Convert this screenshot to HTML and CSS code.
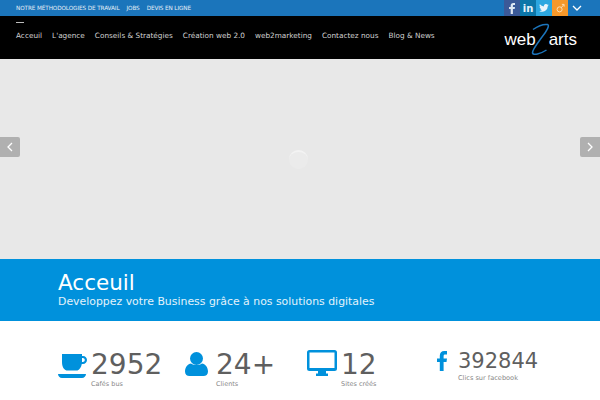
FILE: index.html
```html
<!DOCTYPE html>
<html lang="fr">
<head>
    <meta charset="UTF-8">
    <meta name="viewport" content="width=device-width, initial-scale=1.0">
    <title>web2arts</title>
    <link rel="stylesheet" href="styles.css">
</head>
<body>
    <div class="topbar">
        <ul class="top-links">
            <li>Notre méthodologies de travail</li>
            <li>Jobs</li>
            <li>Devis en ligne</li>
        </ul>
        <div class="social">
            <span class="social-btn fb">
                <svg width="6" height="11" viewBox="0 0 6 11"><path fill="#dfe6f2" d="M1.700 11V6H0V4h1.700V2.600C1.700.9 2.700 0 4.200 0H6v2H4.800c-.7 0-.9.3-.9.9V4H6l-.3 2H3.900v5z"/></svg>
            </span>
            <span class="social-btn in">in</span>
            <span class="social-btn tw">
                <svg width="10" height="8" viewBox="0 0 24 20"><path fill="#e8f4fb" d="M24 2.400c-.9.4-1.800.7-2.800.8 1-.6 1.800-1.600 2.200-2.700-1 .6-2 1-3.100 1.200A4.900 4.900 0 0 0 11.900 6.200 14 14 0 0 1 1.700.9a4.900 4.900 0 0 0 1.500 6.600c-.8 0-1.600-.2-2.200-.6 0 2.400 1.700 4.400 3.900 4.900-.7.2-1.500.2-2.200.1.600 2 2.400 3.400 4.600 3.400A9.900 9.900 0 0 1 0 17.300 14 14 0 0 0 21.500 4.900c1-.7 1.900-1.500 2.500-2.500z"/></svg>
            </span>
            <span class="social-btn gp">
                <svg width="9" height="10" viewBox="0 0 10 11"><circle cx="4" cy="7" r="2.800" fill="none" stroke="#fbe3c0" stroke-width="1"/><path d="M6 5l2.500-3M6.500 1.500h2.500V4" fill="none" stroke="#fbe3c0" stroke-width="1"/></svg>
            </span>
            <span class="social-btn more">
                <svg width="10" height="6" viewBox="0 0 10 6"><path d="M1 1l4 4 4-4" fill="none" stroke="#fff" stroke-width="1.300"/></svg>
            </span>
        </div>
    </div>

    <div class="navbar">
        <ul class="menu">
            <li class="active">Acceuil</li>
            <li>L'agence</li>
            <li>Conseils &amp; Stratégies</li>
            <li>Création web 2.0</li>
            <li>web2marketing</li>
            <li>Contactez nous</li>
            <li>Blog &amp; News</li>
        </ul>
        <div class="logo">
            <span>web</span>
            <svg class="logo-two" width="24" height="33" viewBox="0 0 24 33"><path d="M3 6.500C8 3 14 1 17.500 1.500 20 2 17 8 12 14 7 21 2 27 2.500 30c.5 2.500 8 1 14-3" fill="none" stroke="#1c75bc" stroke-width="1.500"/></svg>
            <span>arts</span>
        </div>
    </div>

    <div class="slider">
        <span class="arrow arrow-left">
            <svg width="6" height="10" viewBox="0 0 6 10"><path d="M5 1L1 5l4 4" fill="none" stroke="#fff" stroke-width="1.300"/></svg>
        </span>
        <span class="spinner"></span>
        <span class="arrow arrow-right">
            <svg width="6" height="10" viewBox="0 0 6 10"><path d="M1 1l4 4-4 4" fill="none" stroke="#fff" stroke-width="1.300"/></svg>
        </span>
    </div>

    <div class="banner">
        <h1>Acceuil</h1>
        <p>Developpez votre Business grâce à nos solutions digitales</p>
    </div>

    <div class="stats">
        <div class="stat stat-coffee">
            <svg class="stat-icon" width="29" height="24" viewBox="0 0 29 24"><path fill="#0091dc" fill-rule="evenodd" d="M4 0h20v2h1c2.300 0 4 1.700 4 4s-1.700 4-4 4h-1.200c-.6 3-2 5.500-4.300 6.500H8.500C5.500 15.500 4 12 4 8zM24 4v4h.8c1.100 0 2-.9 2-2s-.9-2-2-2zM0 20h28c0 2.200-1.800 4-4 4H4c-2.200 0-4-1.800-4-4z"/></svg>
            <div>
                <div class="stat-num">2952</div>
                <div class="stat-label">Cafés bus</div>
            </div>
        </div>
        <div class="stat stat-clients">
            <svg class="stat-icon" width="23" height="24" viewBox="0 0 23 24"><circle cx="11.500" cy="6.500" r="6.500" fill="#0091dc"/><path fill="#0091dc" d="M0 19.500C0 15 3 12 6 11.500c3 2 8 2 11 0 3 .5 6 3.500 6 8 0 3-2 4.500-4.500 4.500h-14C2 24 0 22.500 0 19.500z"/></svg>
            <div>
                <div class="stat-num">24+</div>
                <div class="stat-label">Clients</div>
            </div>
        </div>
        <div class="stat stat-sites">
            <svg class="stat-icon" width="30" height="26" viewBox="0 0 30 26"><path fill="#0091dc" fill-rule="evenodd" d="M2.500 0h25A2.500 2.500 0 0 1 30 2.500v16a2.500 2.500 0 0 1-2.500 2.500H19v2.500h2V26H9v-2.500h2V21H2.500A2.500 2.500 0 0 1 0 18.500v-16A2.500 2.500 0 0 1 2.500 0zM2.500 2.500v15.500h25V2.500z"/></svg>
            <div>
                <div class="stat-num">12</div>
                <div class="stat-label">Sites créés</div>
            </div>
        </div>
        <div class="stat stat-fb">
            <svg class="stat-icon" width="10" height="20" viewBox="0 0 10 20"><path fill="#0091dc" d="M2.800 20V11H0V7.500h2.800V4.700C2.800 1.700 4.500 0 7.200 0H10v3.500H8.200c-1.200 0-1.600.6-1.600 1.600v2.400H10L9.500 11H6.600v9z"/></svg>
            <div>
                <div class="stat-num">392844</div>
                <div class="stat-label">Clics sur facebook</div>
            </div>
        </div>
    </div>
</body>
</html>
```

FILE: styles.css
```css
* {
    margin: 0;
    padding: 0;
    box-sizing: border-box;
}

body {
    background-color: #fff;
    color: #5f5f5f;
    font-family: 'DejaVu Sans', sans-serif;
    overflow: hidden;
}

ul {
    list-style: none;
}

/* Top bar */
.topbar {
    display: flex;
    justify-content: space-between;
    height: 16px;
    padding: 0 15px 0 16px;
    background-color: #1b75bb;
}

.top-links {
    display: flex;
    gap: 7px;
    align-items: center;
    color: #e4eef7;
    font-size: 5.700px;
    letter-spacing: -0.1px;
    text-transform: uppercase;
}

.social {
    display: flex;
}

.social-btn {
    display: flex;
    justify-content: center;
    align-items: center;
    width: 16px;
    height: 16px;
}

.fb { background-color: #3b5998; }
.in {
    background-color: #0c76a8;
    color: #e8f4fb;
    font-size: 10px;
    font-weight: bold;
}
.tw { background-color: #2ca7e0; }
.gp { background-color: #f7982a; }
.more { width: 17px; }

/* Nav */
.navbar {
    display: flex;
    justify-content: space-between;
    height: 43px;
    padding: 0 23px 0 16px;
    background-color: #000;
}

.menu {
    display: flex;
    gap: 10px;
    margin-top: 14px;
    color: #d2d2d2;
    font-size: 7.300px;
    line-height: 11px;
}

.menu .active {
    position: relative;
}

.menu .active::before {
    content: "";
    position: absolute;
    top: -8px;
    left: 0;
    width: 8px;
    height: 1px;
    background-color: #bbb;
}

.logo {
    display: flex;
    align-items: center;
    height: 33px;
    margin-top: 7px;
    color: #fff;
    font-family: 'Liberation Sans', sans-serif;
    font-size: 17px;
}

.logo-two {
    margin: 0 -5px 0 -6px;
}

/* Slider */
.slider {
    position: relative;
    display: flex;
    justify-content: center;
    align-items: center;
    height: 200px;
    background-color: #e8e8e8;
}

.arrow {
    position: absolute;
    top: 78px;
    display: flex;
    justify-content: center;
    align-items: center;
    width: 20px;
    height: 20px;
    background-color: #b0b0b0;
}

.arrow-left {
    left: 0;
    border-radius: 0 2px 2px 0;
}

.arrow-right {
    right: 0;
    border-radius: 2px 0 0 2px;
}

.spinner {
    width: 19px;
    height: 19px;
    margin: 0 3px 0 0;
    border-radius: 50%;
    background-color: #ebebeb;
    border-top: 2px solid #f3f3f3;
}

/* Banner */
.banner {
    height: 62px;
    padding: 10px 0 0 58px;
    background-color: #0091dc;
    color: #fff;
}

.banner h1 {
    font-size: 21.500px;
    font-weight: normal;
    line-height: 27px;
}

.banner p {
    color: #e3f3fb;
    font-size: 10.900px;
    line-height: 12px;
}

/* Stats */
.stats {
    display: flex;
    padding: 29px 0 0 58px;
}

.stat {
    display: flex;
    align-items: flex-start;
}

.stat-coffee { width: 127px; gap: 4px; }
.stat-clients { width: 122px; gap: 8px; }
.stat-sites { width: 130px; gap: 4px; }
.stat-fb { gap: 11px; }

.stat-icon {
    flex-shrink: 0;
    margin-top: 4px;
}

.stat-clients .stat-icon {
    margin-top: 2px;
}

.stat-sites .stat-icon {
    margin-top: 0;
}

.stat-num {
    font-size: 28px;
    line-height: 29px;
}

.stat-label {
    color: #888;
    font-size: 6.500px;
    line-height: 10px;
}

.stat-fb .stat-icon {
    margin-top: 1px;
}

.stat-fb .stat-num {
    font-size: 21px;
    line-height: 23px;
}

.stat-fb .stat-label {
    font-size: 6.600px;
}
```
